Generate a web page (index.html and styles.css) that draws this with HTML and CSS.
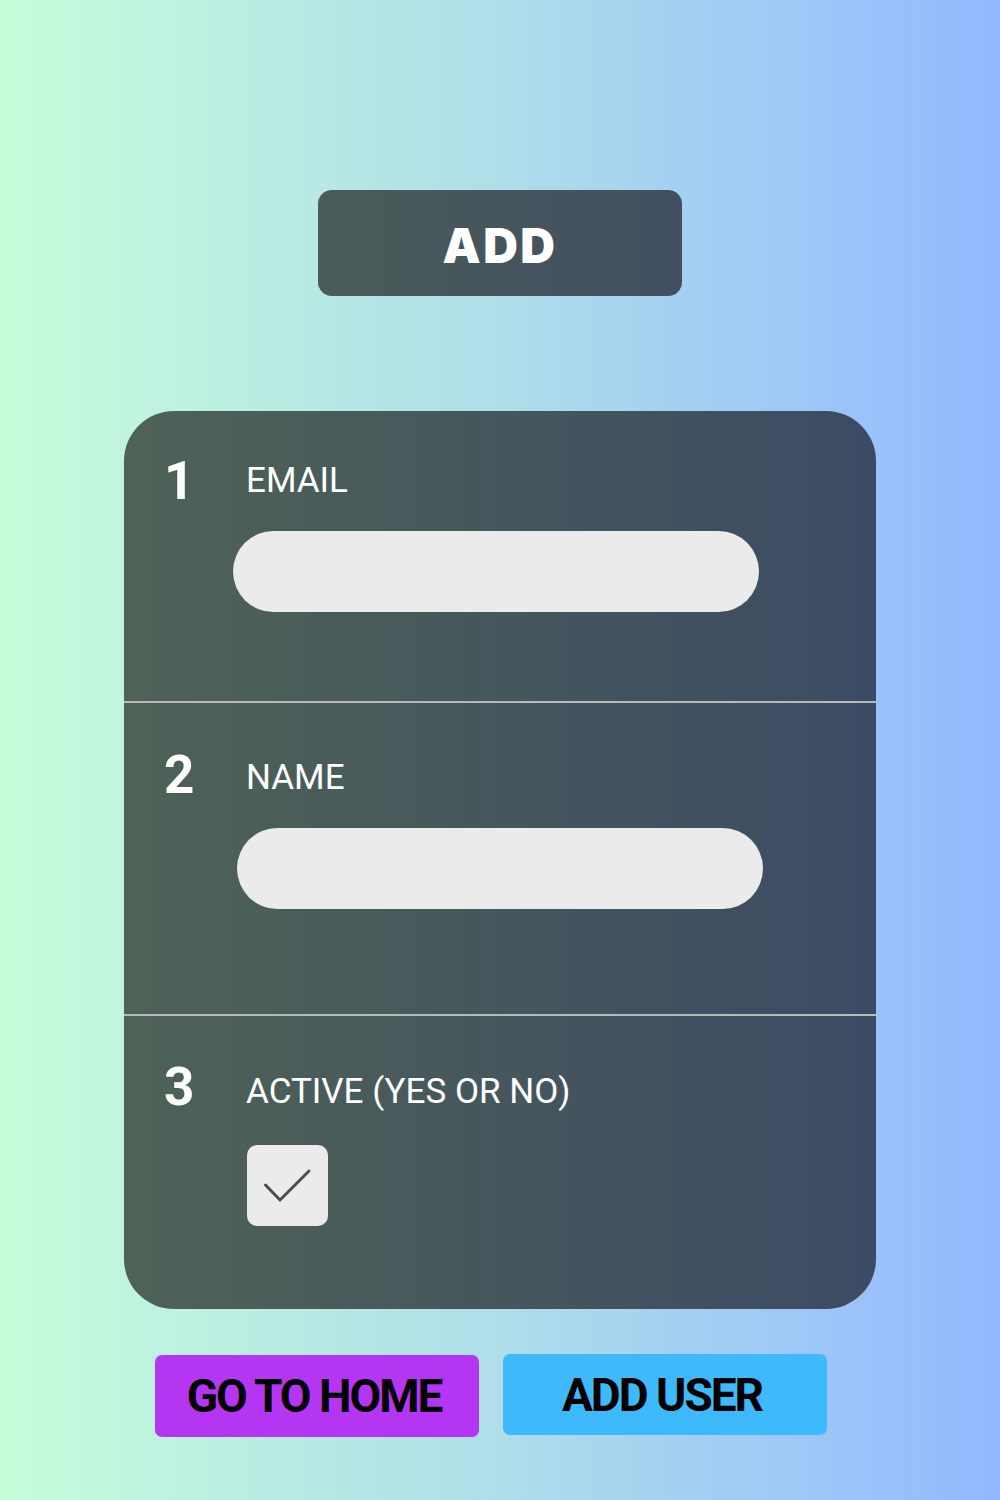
FILE: index.html
```html
<!DOCTYPE html>
<html>
<head>
<meta charset="utf-8">
<link rel="stylesheet" href="styles.css">
</head>
<body>
<main class="page">
  <div class="title-btn">ADD</div>

  <form class="card">
    <section class="field field-1">
      <div class="field-head">
        <span class="num">1</span>
        <span class="label">EMAIL</span>
      </div>
      <div class="input input-1"></div>
    </section>
    <section class="field field-2">
      <div class="field-head">
        <span class="num">2</span>
        <span class="label label-2">NAME</span>
      </div>
      <div class="input input-2"></div>
    </section>
    <section class="field field-3">
      <div class="field-head">
        <span class="num">3</span>
        <span class="label label-3">ACTIVE (YES OR NO)</span>
      </div>
      <div class="checkbox">
        <svg viewBox="0 0 81 81" width="81" height="81">
          <polyline points="18.5,40 33,55 62,26" fill="none" stroke="#4d4d4d" stroke-width="3" stroke-linecap="round" stroke-linejoin="round"/>
        </svg>
      </div>
    </section>
  </form>

  <div class="actions">
    <button class="btn btn-home" type="button">GO TO HOME</button>
    <button class="btn btn-add" type="button">ADD USER</button>
  </div>
</main>
</body>
</html>
```

FILE: styles.css
```css
html, body {
  margin: 0;
  padding: 0;
}

body {
  width: 1000px;
  height: 1500px;
  background: linear-gradient(to right, #c7fcda 0%, #afdde9 50%, #94b8ff 100%);
  font-family: Roboto, "Liberation Sans", sans-serif;
  overflow: hidden;
}

.page {
  display: flex;
  flex-direction: column;
  align-items: center;
  padding-top: 190px;
}

.title-btn {
  box-sizing: border-box;
  width: 364px;
  height: 106px;
  padding-top: 4px;
  border-radius: 14px;
  background: linear-gradient(to right, #4b5b58, #414f61);
  color: #ffffff;
  font-family: Inter, "Liberation Sans", sans-serif;
  font-weight: 900;
  font-size: 48px;
  letter-spacing: 2.5px;
  display: flex;
  align-items: center;
  justify-content: center;
}

.card {
  margin: 115px 0 0 0;
  width: 752px;
  height: 898px;
  border-radius: 50px;
  background: linear-gradient(to right, #4f6256 0%, #3c4b64 100%);
  display: flex;
  flex-direction: column;
  overflow: hidden;
}

.field {
  box-sizing: border-box;
  padding-top: 40px;
}

.field-1 {
  height: 292px;
  border-bottom: 2px solid #b9b9b9;
}

.field-2 {
  height: 313px;
  padding-top: 42px;
  border-bottom: 2px solid #b9b9b9;
}

.field-3 {
  height: 293px;
  padding-top: 41px;
}

.field-head {
  height: 60px;
  display: flex;
  align-items: center;
  padding-left: 40px;
  color: #ffffff;
}

.num {
  width: 82px;
  font-weight: 700;
  font-size: 53px;
  line-height: 60px;
}

.label {
  font-weight: 400;
  font-size: 35px;
  line-height: 40px;
}

.label-2 {
  margin-top: 5px;
}

.label-3 {
  margin-top: 10px;
}

.input {
  width: 526px;
  height: 81px;
  border-radius: 41px;
  background: #ebebeb;
}

.input-1 {
  margin: 20px 0 0 109px;
}

.input-2 {
  margin: 23px 0 0 113px;
}

.checkbox {
  width: 81px;
  height: 81px;
  border-radius: 10px;
  background: #ebebeb;
  margin: 28px 0 0 123px;
}

.checkbox svg {
  display: block;
}

.actions {
  margin-top: 45px;
  display: flex;
  align-items: flex-start;
  gap: 24px;
  padding-right: 18px;
}

.btn {
  box-sizing: border-box;
  width: 324px;
  height: 81px;
  border: none;
  border-radius: 7px;
  color: #000000;
  font-family: Roboto, "Liberation Sans", sans-serif;
  font-weight: 700;
  font-size: 46px;
  letter-spacing: -2px;
  padding: 0 6px 0 0;
  display: flex;
  align-items: center;
  justify-content: center;
}

.btn-home {
  background: #b536f2;
  margin-top: 1px;
  height: 82px;
}

.btn-add {
  background: #3eb9fc;
}
```
